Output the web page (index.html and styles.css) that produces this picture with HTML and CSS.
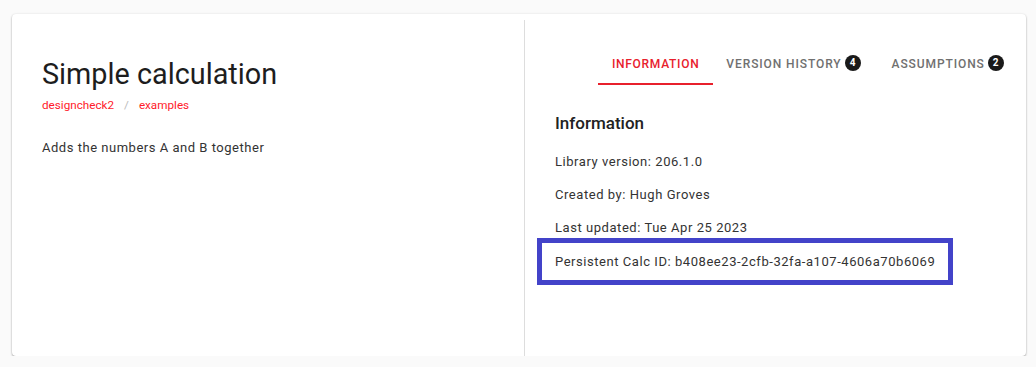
FILE: index.html
```html
<!DOCTYPE html>
<html lang="en">
<head>
    <meta charset="UTF-8">
    <meta name="viewport" content="width=device-width, initial-scale=1.0">
    <title>Simple calculation</title>
    <link rel="stylesheet" href="styles.css">
</head>
<body>
    <div class="card">
        <div class="calc-summary">
            <h1 class="calc-title">Simple calculation</h1>
            <div class="crumbs">
                <a href="#">designcheck2</a>
                <span class="sep">/</span>
                <a href="#">examples</a>
            </div>
            <p class="calc-desc">Adds the numbers A and B together</p>
        </div>

        <div class="calc-details">
            <div class="tabs">
                <div class="tab active">Information</div>
                <div class="tab">Version history <span class="badge">4</span></div>
                <div class="tab">Assumptions <span class="badge">2</span></div>
            </div>

            <div class="info">
                <h2>Information</h2>
                <p>Library version: 206.1.0</p>
                <p>Created by: Hugh Groves</p>
                <p>Last updated: Tue Apr 25 2023</p>
                <p class="highlight">Persistent Calc ID: b408ee23-2cfb-32fa-a107-4606a70b6069</p>
            </div>
        </div>
    </div>
</body>
</html>
```

FILE: styles.css
```css
body {
    margin: 0;
    padding: 14px 10px 0 12px;
    font-family: Roboto, "Noto Sans", sans-serif;
    background-color: #fafafa;
    color: #222;
}
.card {
    display: flex;
    height: 342px;
    background-color: white;
    border-radius: 4px;
    box-shadow: 0 1px 2px rgba(0, 0, 0, 0.35), 0 0 3px rgba(0, 0, 0, 0.06);
}
.calc-summary {
    width: 482px;
    padding: 36px 0 0 30px;
    border-right: 1px solid #ddd;
    margin-top: 6px;
}
.calc-title {
    margin: 0;
    font-size: 28.8px;
    font-weight: 400;
    line-height: 36px;
    color: #1d1d1d;
}
.crumbs {
    margin-top: 6px;
    font-size: 11.7px;
    display: flex;
    gap: 10px;
}
.crumbs a {
    color: #ff1a2a;
    text-decoration: none;
}
.crumbs .sep {
    color: #bbb;
}
.calc-desc {
    margin: 28px 0 0;
    font-size: 13px;
    letter-spacing: 0.52px;
    color: #333;
}
.calc-details {
    flex: 1;
}
.tabs {
    display: flex;
    padding: 30px 0 0 73px;
}
.tab {
    display: flex;
    align-items: center;
    gap: 3px;
    height: 39px;
    padding: 0 18px 0 13px;
    font-size: 12px;
    font-weight: 500;
    letter-spacing: 0.9px;
    text-transform: uppercase;
    color: #707070;
    border-bottom: 2px solid transparent;
}
.tab.active {
    color: #e8202c;
    border-bottom-color: #e8202c;
    padding: 0 14px;
    letter-spacing: 0.7px;
}
.badge {
    display: inline-flex;
    align-items: center;
    justify-content: center;
    width: 16px;
    height: 16px;
    border-radius: 50%;
    background-color: #1a1a1a;
    color: white;
    font-size: 10px;
    font-weight: 700;
    letter-spacing: 0;
    margin-top: -2px;
}
.info {
    padding: 0 0 0 12px;
}
.info h2 {
    margin: 28px 0 0 18px;
    padding-bottom: 4px;
    font-size: 17px;
    font-weight: 500;
    color: #222;
}
.info p {
    margin: 16px 0 0;
    padding: 0 0 0 18px;
    font-size: 13px;
    line-height: 17px;
    letter-spacing: 0.55px;
    color: #333;
}
.info p.highlight {
    display: inline-block;
    margin-top: 2px;
    padding: 10px 13px;
    border: 5px solid #4343c9;
}
```
